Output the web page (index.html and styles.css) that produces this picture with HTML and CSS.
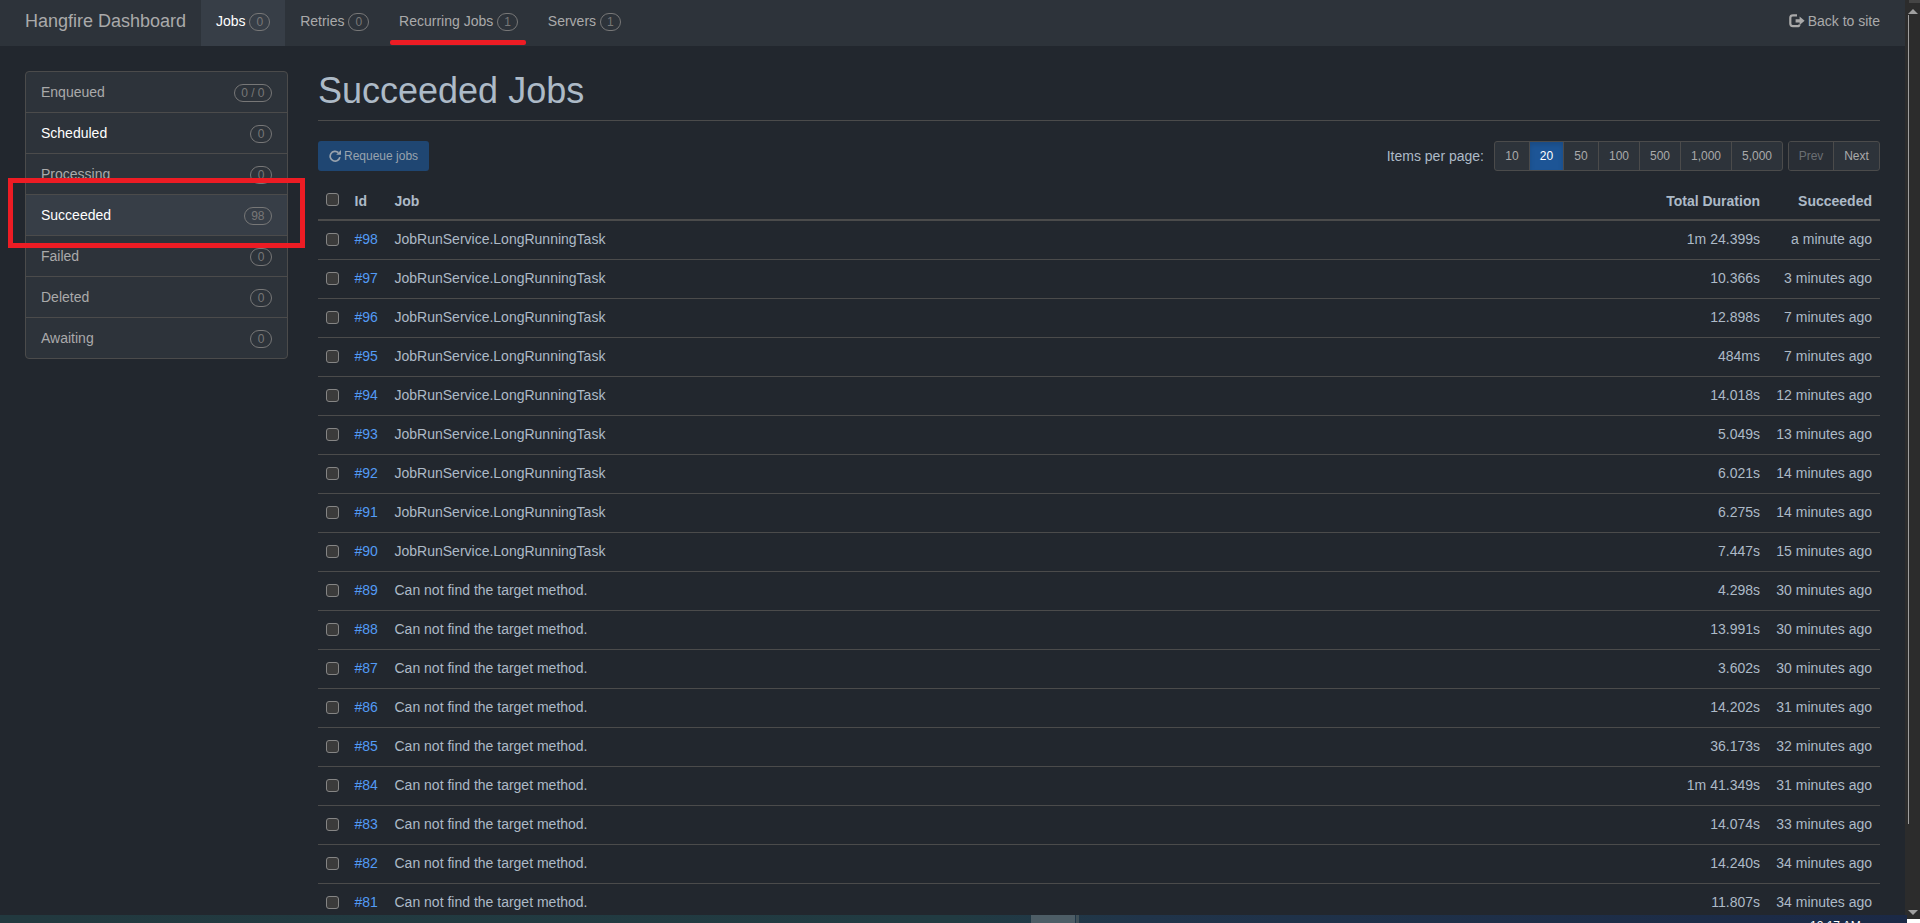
FILE: index.html
```
<!DOCTYPE html>
<html lang="en">
<head>
<meta charset="utf-8">
<title>Succeeded Jobs – Hangfire Dashboard</title>
<link rel="stylesheet" href="styles.css">
</head>
<body>
<div class="page">
<nav class="navbar">
  <a class="brand">Hangfire Dashboard</a>
  <a class="tab active">Jobs <span class="badge">0</span></a>
  <a class="tab">Retries <span class="badge">0</span></a>
  <a class="tab marked">Recurring Jobs <span class="badge">1</span></a>
  <a class="tab">Servers <span class="badge">1</span></a>
  <a class="tab back"><svg class="icon-out" viewBox="0 0 16 14" width="16" height="14"><path d="M8 1.3H4Q1.3 1.3 1.3 3.8V9.6Q1.3 12.2 4 12.2H8Q10.4 12.2 10.4 10.4" fill="none" stroke="currentColor" stroke-width="2.2"/><path d="M10.6 2.6 15.6 6.8 10.6 11V8.4H6.6V5.2H10.6Z" fill="currentColor"/></svg>Back to site</a>
</nav>
<div class="body">
  <aside class="sidebar">
    <div class="menu">
      <a class="item">Enqueued<span class="badge">0 / 0</span></a>
      <a class="item lit">Scheduled<span class="badge">0</span></a>
      <a class="item">Processing<span class="badge">0</span></a>
      <a class="item lit current">Succeeded<span class="badge">98</span></a>
      <a class="item">Failed<span class="badge">0</span></a>
      <a class="item">Deleted<span class="badge">0</span></a>
      <a class="item">Awaiting<span class="badge">0</span></a>
    </div>
    <div class="highlight"></div>
  </aside>
  <main class="main">
    <h1>Succeeded Jobs</h1>
    <div class="toolbar">
      <button class="requeue"><svg viewBox="0 0 12 12" width="12" height="12"><path d="M9.4 2.6A4.9 4.9 0 1 0 10.9 7.2" fill="none" stroke="currentColor" stroke-width="1.7"/><path d="M12 0V4.8H7.2Z" fill="currentColor"/></svg>Requeue jobs</button>
      <span class="per">Items per page:</span>
      <div class="group sizes"><a>10</a><a class="on">20</a><a>50</a><a>100</a><a>500</a><a>1,000</a><a>5,000</a></div>
      <div class="group pager"><a class="off">Prev</a><a>Next</a></div>
    </div>
    <table class="jobs">
      <thead><tr><th class="check"><i class="box"></i></th><th class="id">Id</th><th>Job</th><th class="num">Total Duration</th><th class="num ago">Succeeded</th></tr></thead>
      <tbody id="rows"></tbody>
    </table>
  </main>
</div>
<div class="scrollbar"><i class="cap"></i><i class="up"></i><i class="thumb"></i><i class="down"></i></div>
<div class="taskbar"><i class="app"></i><i class="app-edge"></i><span class="clock">12:17 AM</span><i class="corner"></i></div>
</div>
<script src="script.js"></script>
</body>
</html>
```
FILE: styles.css
```
* { box-sizing: border-box; }
body { margin: 0; background: #22272e; color: #adbac7; font: 14px/20px "Liberation Sans", Arial, sans-serif; }
.page { position: relative; width: 1920px; height: 923px; overflow: hidden; }
.navbar { display: flex; width: 1905px; height: 46px; padding-left: 10px; background: #2d333a; color: #aaa; }
.brand { width: 191px; padding: 11px 15px; font-size: 18px; white-space: nowrap; }
.tab { padding: 11px 15px 0; white-space: nowrap; }
.tab.active { background: #373e47; color: #fff; }
.tab.marked { position: relative; }
.tab.marked::after { content: ""; position: absolute; left: 6px; right: 7px; top: 40px; height: 5px; border-radius: 2px; background: #ed1c24; }
.back { margin-left: auto; padding-right: 25px; }
.icon-out { margin-right: 3px; vertical-align: -2px; }
.badge { display: inline-block; height: 18px; padding: 2px 6px; border: 1px solid #777; border-radius: 10px; color: #777; font-size: 12px; line-height: 12px; text-align: center; }
.tab .badge { vertical-align: 0; }
.body { display: flex; gap: 30px; padding: 25px 40px 0 25px; }
.sidebar { position: relative; flex: 0 0 263px; }
.menu { border: 1px solid #4b4b4b; border-radius: 4px; overflow: hidden; background: #2d333a; }
.item { display: flex; justify-content: space-between; height: 41px; padding: 10px 15px; border-bottom: 1px solid #4b4b4b; color: #aaa; }
.item:last-child { border-bottom: 0; height: 40px; }
.item .badge { margin-top: 2px; padding: 2px 6.5px; }
.lit { color: #fff; }
.current { background: #373e47; }
.highlight { position: absolute; left: -17px; top: 107px; width: 297px; height: 70px; border: 5px solid #ed1c24; }
.main { flex: 0 0 1562px; }
h1 { margin: 0 0 20px; height: 50px; border-bottom: 1px solid #4b4b4b; font-size: 36px; line-height: 39.6px; font-weight: 400; }
.toolbar { display: flex; height: 30px; align-items: center; }
.requeue { display: flex; align-items: center; gap: 3px; width: 111px; height: 30px; padding: 0 0 1px 11px; border: 0; border-radius: 3px; background: #1f4672; color: #99a3ae; font: 12px/18px "Liberation Sans", Arial, sans-serif; white-space: nowrap; }
.per { margin-left: auto; margin-right: 10px; }
.group { display: flex; height: 30px; border: 1px solid #4b4b4b; border-radius: 3px; background: #2d333a; color: #aaa; overflow: hidden; font-size: 12px; line-height: 29px; }
.group a { border-left: 1px solid #4b4b4b; text-align: center; }
.group a:first-child { border-left: 0; }
.sizes { display: grid; grid-template-columns: 34px 34px 35px 41px 41px 51px 51px; width: 289px; margin-right: 5px; }
.sizes a.on { background: #1d5596; color: #fff; box-shadow: inset 0 3px 5px rgba(0,0,0,.125); }
.pager { display: grid; grid-template-columns: 44px 46px; width: 92px; }
.pager .off { background: #292e35; color: #6b6e73; }
.jobs { width: 100%; margin-top: 10px; border-collapse: separate; border-spacing: 0; table-layout: fixed; }
th, td { padding: 0 8px; text-align: left; white-space: nowrap; }
th { height: 40px; padding-top: 2px; border-bottom: 2px solid #4b4b4b; }
td { height: 39px; padding-bottom: 2px; border-bottom: 1px solid #4b4b4b; }
.check { width: 28.5px; }
.id { width: 40px; }
.num { width: 140px; text-align: right; }
.ago { width: 112px; }
.link { color: #539bf5; }
.box { display: block; width: 13px; height: 13px; border: 1px solid #858585; border-radius: 3px; background: #3b3b3b; }
th .box { margin-top: -4px; }
.scrollbar { position: absolute; left: 1905px; top: 0; width: 15px; height: 919px; background: #2c2c2c; }
.scrollbar i { position: absolute; }
.cap { left: 4px; top: 0; width: 11px; height: 3px; background: #454545; }
.up { left: 3px; top: 9px; border: 5px solid transparent; border-top: 0; border-bottom-color: #a0a0a0; }
.thumb { left: 3px; top: 15px; width: 1px; height: 809px; background: #9f9f9f; }
.down { left: 3px; top: 910px; border: 5px solid transparent; border-bottom: 0; border-top-color: #a0a0a0; }
.taskbar { position: absolute; left: 0; top: 915px; width: 1907px; height: 8px; background: linear-gradient(90deg, #22393f, #213b42 50%, #20344a 60%, #1b2946); }
.taskbar i { position: absolute; top: 0; height: 8px; }
.app { left: 1031px; width: 44px; background: #4d5d66; }
.app-edge { left: 1076px; width: 3px; background: #405058; }
.clock { position: absolute; left: 1810px; top: 4px; color: #fff; font-size: 12px; line-height: 14px; white-space: nowrap; }
.taskbar .corner { left: 1907px; top: 4px; width: 13px; height: 4px; background: #fff; }
```
FILE: script.js
```
const runs = [
  ["1m 24.399s", "a minute ago"], ["10.366s", "3 minutes ago"], ["12.898s", "7 minutes ago"],
  ["484ms", "7 minutes ago"], ["14.018s", "12 minutes ago"], ["5.049s", "13 minutes ago"],
  ["6.021s", "14 minutes ago"], ["6.275s", "14 minutes ago"], ["7.447s", "15 minutes ago"],
  ["4.298s", "30 minutes ago"], ["13.991s", "30 minutes ago"], ["3.602s", "30 minutes ago"],
  ["14.202s", "31 minutes ago"], ["36.173s", "32 minutes ago"], ["1m 41.349s", "31 minutes ago"],
  ["14.074s", "33 minutes ago"], ["14.240s", "34 minutes ago"], ["11.807s", "34 minutes ago"]
];
document.getElementById("rows").innerHTML = runs.map(([duration, ago], i) =>
  `<tr><td><i class="box"></i></td><td class="link">#${98 - i}</td><td>${i < 9 ? "JobRunService.LongRunningTask" : "Can not find the target method."}</td><td class="num">${duration}</td><td class="num">${ago}</td></tr>`
).join("");
```
